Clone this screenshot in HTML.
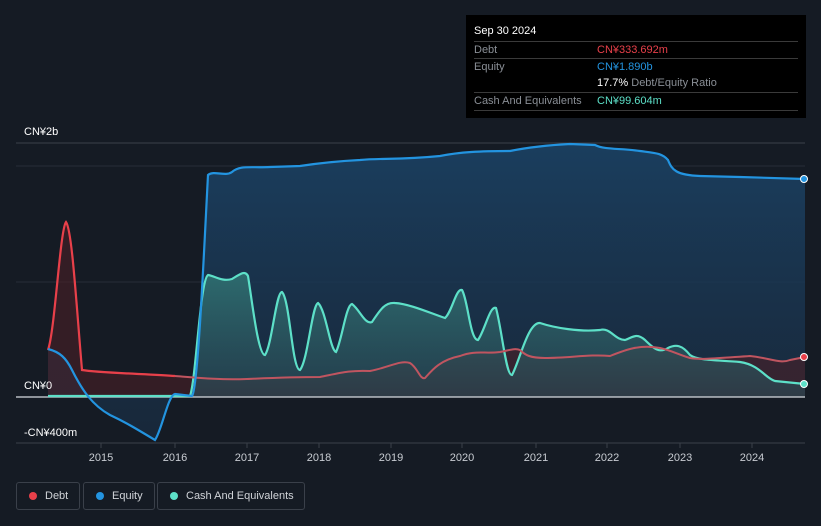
<!DOCTYPE html>
<html><head><meta charset="utf-8"><style>
body{margin:0;width:821px;height:526px;background:#151b24;font-family:"Liberation Sans",sans-serif;overflow:hidden;position:relative}
.tt{position:absolute;left:466px;top:15px;width:340px;height:103px;background:#000;color:#fff;font-size:11px}
.tt .h{position:absolute;left:8px;top:10px;font-size:11px}
.row{position:absolute;left:8px;width:324px;border-top:1px solid #3a3a3a;height:17px;line-height:17px}
.row .l{color:#8a8f96;position:absolute;left:0}
.row .v{position:absolute;left:123px}
.leg{position:absolute;top:482px;height:26px;border:1px solid #3a404a;border-radius:3px;color:#d0d3d8;font-size:11px;line-height:26px}
.dot{display:inline-block;width:8px;height:8px;border-radius:50%;margin:0 8px 0 12px;vertical-align:-1px}
</style></head><body>
<svg width="821" height="526" style="position:absolute;left:0;top:0">
<defs>
<linearGradient id="eq" x1="0" y1="0" x2="0" y2="1"><stop offset="0" stop-color="#1a3e5e"/><stop offset="1" stop-color="#1a3048" stop-opacity=".6"/></linearGradient>
<linearGradient id="ca" x1="0" y1="0" x2="0" y2="1"><stop offset="0" stop-color="#2d6b6e"/><stop offset="1" stop-color="#2a4a55" stop-opacity=".6"/></linearGradient>
</defs>
<line x1="16" y1="143" x2="805" y2="143" stroke="#3a404a"/>
<line x1="16" y1="166" x2="805" y2="166" stroke="#262d37"/>
<line x1="16" y1="282" x2="805" y2="282" stroke="#262d37"/>
<line x1="16" y1="443" x2="805" y2="443" stroke="#3a404a"/>
<g stroke="#3a404a"><line x1="101" y1="443" x2="101" y2="448"/><line x1="175" y1="443" x2="175" y2="448"/><line x1="247" y1="443" x2="247" y2="448"/><line x1="319" y1="443" x2="319" y2="448"/><line x1="391" y1="443" x2="391" y2="448"/><line x1="462" y1="443" x2="462" y2="448"/><line x1="536" y1="443" x2="536" y2="448"/><line x1="607" y1="443" x2="607" y2="448"/><line x1="680" y1="443" x2="680" y2="448"/><line x1="752" y1="443" x2="752" y2="448"/></g>
<path d="M48,349 C60,352 66,358 72,370 C82,390 92,405 110,415 C125,422 135,428 155,440 C162,430 168,395 175,394 L192,396 C198,390 204,250 208,175 C214,170 225,177 232,172 C240,165 250,168 270,167 L300,166 C320,163 340,161 360,160 C380,158 400,160 440,156 C460,152 480,151 510,151 C530,147 550,145 570,144 L595,145 C605,150 620,148 640,151 C655,153 662,153 668,160 C672,170 676,175 700,176 L740,177 L805,179 L805,397 L48,397 Z" fill="url(#eq)"/>
<path d="M48,350 C55,330 60,230 66,222 C72,230 76,300 82,370 C100,373 150,374 175,376 C200,378 220,380 247,379 C270,378 290,377 320,377 C340,373 350,370 370,371 C390,367 400,360 410,363 C418,368 420,380 425,378 C432,370 440,360 460,356 C475,350 485,354 500,352 C510,350 515,348 520,350 C525,355 530,358 545,358 C570,358 590,354 610,356 C625,350 640,344 660,348 C670,350 680,355 690,358 C700,360 720,358 750,356 C770,358 780,364 790,360 L805,357 L805,397 L48,397 Z" fill="#4a2026" opacity=".6"/>
<path d="M48,396 L190,396 C196,380 200,280 208,275 C215,276 222,282 232,279 C240,274 245,270 248,276 C252,300 258,355 265,355 C272,345 276,292 282,292 C290,300 292,370 300,370 C308,360 312,305 318,303 C326,310 330,350 336,352 C342,340 346,305 352,304 C360,310 365,325 372,322 C380,310 385,302 395,303 C410,304 430,313 445,318 C452,312 456,288 462,290 C468,300 470,340 478,340 C485,330 490,305 496,308 C502,330 506,376 512,375 C520,360 528,322 540,323 C555,328 580,332 600,330 C610,327 615,340 625,340 C632,338 636,332 645,340 C655,350 660,353 668,348 C676,344 682,345 690,355 C698,361 720,360 740,362 C760,365 765,378 775,381 L805,384 L805,397 L48,397 Z" fill="url(#ca)"/>
<line x1="16" y1="397" x2="805" y2="397" stroke="#d8dbe0" stroke-width="1.2"/>
<path d="M48,396 L190,396 C196,380 200,280 208,275 C215,276 222,282 232,279 C240,274 245,270 248,276 C252,300 258,355 265,355 C272,345 276,292 282,292 C290,300 292,370 300,370 C308,360 312,305 318,303 C326,310 330,350 336,352 C342,340 346,305 352,304 C360,310 365,325 372,322 C380,310 385,302 395,303 C410,304 430,313 445,318 C452,312 456,288 462,290 C468,300 470,340 478,340 C485,330 490,305 496,308 C502,330 506,376 512,375 C520,360 528,322 540,323 C555,328 580,332 600,330 C610,327 615,340 625,340 C632,338 636,332 645,340 C655,350 660,353 668,348 C676,344 682,345 690,355 C698,361 720,360 740,362 C760,365 765,378 775,381 L805,384" fill="none" stroke="#5de0c8" stroke-width="2.2"/>
<path d="M48,350 C55,330 60,230 66,222 C72,230 76,300 82,370 C100,373 150,374 175,376" fill="none" stroke="#e8404a" stroke-width="2.2"/>
<path d="M175,376 C200,378 220,380 247,379 C270,378 290,377 320,377 C340,373 350,370 370,371 C390,367 400,360 410,363 C418,368 420,380 425,378 C432,370 440,360 460,356 C475,350 485,354 500,352 C510,350 515,348 520,350 C525,355 530,358 545,358 C570,358 590,354 610,356 C625,350 640,344 660,348 C670,350 680,355 690,358 C700,360 720,358 750,356 C770,358 780,364 790,360 L805,357" fill="none" stroke="#c05560" stroke-width="2"/>
<path d="M48,349 C60,352 66,358 72,370 C82,390 92,405 110,415 C125,422 135,428 155,440 C162,430 168,395 175,394 L192,396 C198,390 204,250 208,175 C214,170 225,177 232,172 C240,165 250,168 270,167 L300,166 C320,163 340,161 360,160 C380,158 400,160 440,156 C460,152 480,151 510,151 C530,147 550,145 570,144 L595,145 C605,150 620,148 640,151 C655,153 662,153 668,160 C672,170 676,175 700,176 L740,177 L805,179" fill="none" stroke="#2394e0" stroke-width="2.2"/>
<circle cx="804" cy="179" r="3.5" fill="#2394e0" stroke="#fff"/>
<circle cx="804" cy="357" r="3.5" fill="#e8404a" stroke="#fff"/>
<circle cx="804" cy="384" r="3.5" fill="#5de0c8" stroke="#fff"/>
<g fill="#fff" font-size="11" font-family="Liberation Sans"><text x="24" y="135">CN¥2b</text><text x="24" y="389">CN¥0</text><text x="24" y="436">-CN¥400m</text></g>
<g fill="#c8ccd2" font-size="11" font-family="Liberation Sans" text-anchor="middle"><text x="101" y="461">2015</text><text x="175" y="461">2016</text><text x="247" y="461">2017</text><text x="319" y="461">2018</text><text x="391" y="461">2019</text><text x="462" y="461">2020</text><text x="536" y="461">2021</text><text x="607" y="461">2022</text><text x="680" y="461">2023</text><text x="752" y="461">2024</text></g>
</svg>
<div class="tt"><div class="h">Sep 30 2024</div>
<div class="row" style="top:26px"><span class="l">Debt</span><span class="v" style="color:#e8404a">CN¥333.692m</span></div>
<div class="row" style="top:43px"><span class="l">Equity</span><span class="v" style="color:#2394e0">CN¥1.890b</span></div>
<div class="row" style="top:60px;border-top:none"><span class="v">17.7% <span style="color:#8a8f96">Debt/Equity Ratio</span></span></div>
<div class="row" style="top:77px"><span class="l">Cash And Equivalents</span><span class="v" style="color:#5de0c8">CN¥99.604m</span></div>
<div class="row" style="top:95px;height:0"></div>
</div>
<div class="leg" style="left:16px;width:62px"><span class="dot" style="background:#e8404a"></span>Debt</div>
<div class="leg" style="left:83px;width:70px"><span class="dot" style="background:#2394e0"></span>Equity</div>
<div class="leg" style="left:157px;width:146px"><span class="dot" style="background:#5de0c8"></span>Cash And Equivalents</div>
</body></html>
